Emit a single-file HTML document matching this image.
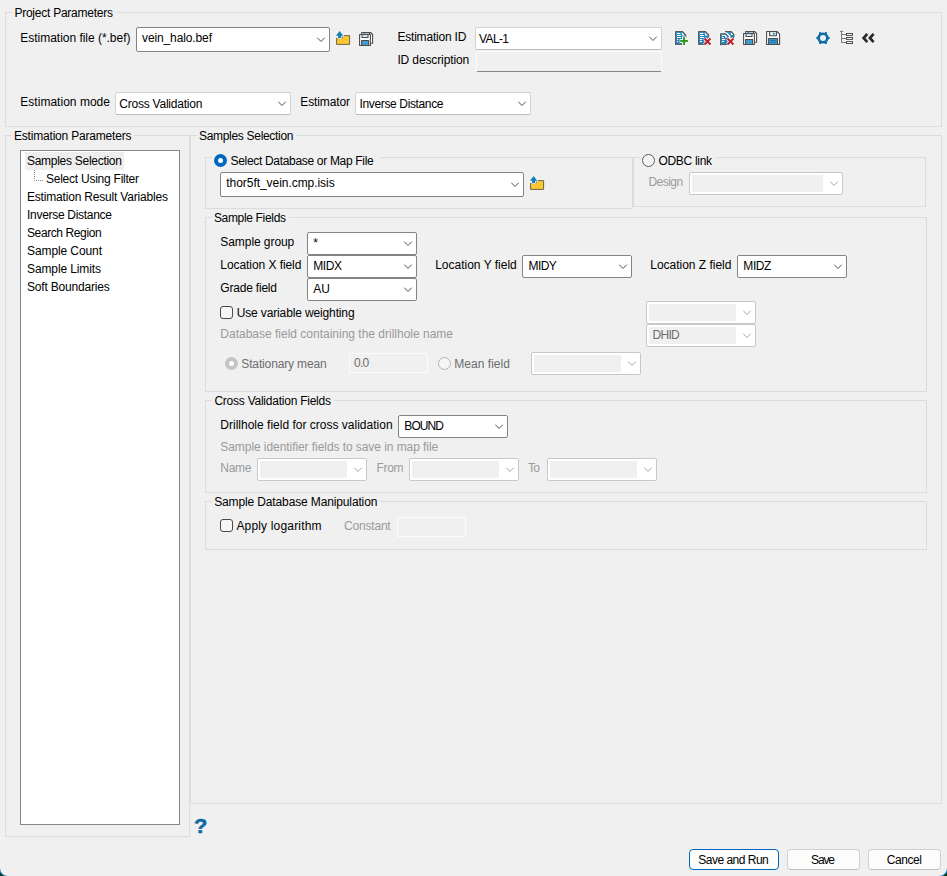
<!DOCTYPE html>
<html><head><meta charset="utf-8"><title>Estimation</title>
<style>
html,body{margin:0;padding:0}
body{width:947px;height:876px;overflow:hidden;background:#0a4012;position:relative;font-family:"Liberation Sans",sans-serif;font-size:12px}
#fr{position:absolute;left:-1px;top:-30px;width:949px;height:907px;box-sizing:border-box;background:#f0f0f0;border:1.5px solid #0a78d6;border-radius:9px}
#w{position:absolute;left:0;top:0;width:947px;height:876px}
#w div,#w svg.a,#w span.t{position:absolute;box-sizing:border-box}
.t{white-space:nowrap;line-height:14px;color:#000}
.gb{border:1px solid #dcdcdc}
.gap{background:#f0f0f0}
.tree{background:#fff;border:1px solid #828790}
.sel{background:#eeeeee}
.cbd{background:#fff;border:1px solid #848484;border-radius:2px}
.cbl{background:#fff;border:1px solid #d2d2d2;border-bottom-color:#bdbdbd;border-radius:2px}
.cbx{background:#fff;border:1px solid #c8c8c8;border-radius:2px}
.fill{background:#f0f0f0}
.edis{background:#f0f0f0;border:1px solid #fbfbfb;border-bottom:1px solid #868686;border-radius:2px}
.edis2{background:#f0f0f0;border:1px solid #fcfcfc;border-radius:1px}
.ron{width:13px;height:13px;border-radius:50%;background:#fff;border:4px solid #0067c0}
.roff{width:13px;height:13px;border-radius:50%;background:#f4f4f4;border:1px solid #5c5c5c}
.rdon{width:13px;height:13px;border-radius:50%;background:#fff;border:4px solid #c4c4c4}
.rdoff{width:13px;height:13px;border-radius:50%;background:#f6f6f6;border:1px solid #b4b4b4}
.ck{width:13px;height:13px;border-radius:3px;background:#f6f6f6;border:1px solid #4a4a4a}
.btn{background:#fdfdfd;border:1px solid #d0d0d0;border-bottom-color:#bdbdbd;border-radius:4px}
.btn.def{border-color:#0067c0;border-bottom-color:#0067c0}
</style></head>
<body><div id="fr"></div><div id="w">
<div class="gb" style="left:5px;top:12px;width:937px;height:115px;"></div><div class="gap" style="left:12px;top:11px;width:104px;height:3px"></div>
<div class="gb" style="left:5px;top:135px;width:185px;height:702px;"></div><div class="gap" style="left:12px;top:134px;width:122px;height:3px"></div>
<div class="gb" style="left:190px;top:135px;width:752px;height:669px;"></div><div class="gap" style="left:197px;top:134px;width:99px;height:3px"></div>
<div class="gb" style="left:205px;top:157px;width:428px;height:52px;"></div><div class="gap" style="left:212px;top:156px;width:168px;height:3px"></div>
<div class="gb" style="left:633px;top:157px;width:293px;height:50px;"></div><div class="gap" style="left:640px;top:156px;width:76px;height:3px"></div>
<div class="gb" style="left:205px;top:217px;width:722px;height:175px;"></div><div class="gap" style="left:212px;top:216px;width:77px;height:3px"></div>
<div class="gb" style="left:205px;top:400px;width:722px;height:93px;"></div><div class="gap" style="left:212px;top:399px;width:122px;height:3px"></div>
<div class="gb" style="left:205px;top:501px;width:722px;height:49px;"></div><div class="gap" style="left:212px;top:500px;width:168px;height:3px"></div>
<div class="tree" style="left:20px;top:150px;width:160px;height:675px;"></div>
<div class="sel" style="left:25px;top:152px;width:99px;height:18px;"></div>
<svg class="a" style="left:33px;top:169px" width="11" height="13" viewBox="0 0 11 13"><path d="M1.5 1 V11.5 H10" fill="none" stroke="#8a8a8a" stroke-width="1" stroke-dasharray="1 1"/></svg>
<div class="cbd" style="left:136px;top:27px;width:194px;height:25px;"></div><svg class="a" style="left:315px;top:35.9px" width="12" height="8" viewBox="0 0 12 8"><path d="M2.6 2 L6 5.5 L9.4 2" fill="none" stroke="#505050" stroke-width="1" stroke-linecap="round" stroke-linejoin="round"/></svg>
<div class="cbl" style="left:475px;top:27px;width:187px;height:23px;"></div><svg class="a" style="left:647px;top:34.9px" width="12" height="8" viewBox="0 0 12 8"><path d="M2.6 2 L6 5.5 L9.4 2" fill="none" stroke="#505050" stroke-width="1" stroke-linecap="round" stroke-linejoin="round"/></svg>
<div class="edis" style="left:476px;top:51px;width:186px;height:21px;"></div>
<div class="cbl" style="left:115px;top:92px;width:176px;height:23px;"></div><svg class="a" style="left:276px;top:99.9px" width="12" height="8" viewBox="0 0 12 8"><path d="M2.6 2 L6 5.5 L9.4 2" fill="none" stroke="#505050" stroke-width="1" stroke-linecap="round" stroke-linejoin="round"/></svg>
<div class="cbl" style="left:355px;top:92px;width:176px;height:23px;"></div><svg class="a" style="left:516px;top:99.9px" width="12" height="8" viewBox="0 0 12 8"><path d="M2.6 2 L6 5.5 L9.4 2" fill="none" stroke="#505050" stroke-width="1" stroke-linecap="round" stroke-linejoin="round"/></svg>
<div class="cbd" style="left:220px;top:172px;width:304px;height:25px;"></div><svg class="a" style="left:509px;top:180.9px" width="12" height="8" viewBox="0 0 12 8"><path d="M2.6 2 L6 5.5 L9.4 2" fill="none" stroke="#505050" stroke-width="1" stroke-linecap="round" stroke-linejoin="round"/></svg>
<div class="cbx" style="left:689px;top:172px;width:154px;height:23px;"></div><div class="fill" style="left:692px;top:175px;width:131px;height:17px;"></div><svg class="a" style="left:828px;top:179.9px" width="12" height="8" viewBox="0 0 12 8"><path d="M2.6 2 L6 5.5 L9.4 2" fill="none" stroke="#a6a6a6" stroke-width="1" stroke-linecap="round" stroke-linejoin="round"/></svg>
<div class="cbd" style="left:307px;top:232px;width:110px;height:23px;"></div><svg class="a" style="left:402px;top:239.9px" width="12" height="8" viewBox="0 0 12 8"><path d="M2.6 2 L6 5.5 L9.4 2" fill="none" stroke="#505050" stroke-width="1" stroke-linecap="round" stroke-linejoin="round"/></svg>
<div class="cbd" style="left:307px;top:255px;width:110px;height:23px;"></div><svg class="a" style="left:402px;top:262.9px" width="12" height="8" viewBox="0 0 12 8"><path d="M2.6 2 L6 5.5 L9.4 2" fill="none" stroke="#505050" stroke-width="1" stroke-linecap="round" stroke-linejoin="round"/></svg>
<div class="cbd" style="left:307px;top:278px;width:110px;height:23px;"></div><svg class="a" style="left:402px;top:285.9px" width="12" height="8" viewBox="0 0 12 8"><path d="M2.6 2 L6 5.5 L9.4 2" fill="none" stroke="#505050" stroke-width="1" stroke-linecap="round" stroke-linejoin="round"/></svg>
<div class="cbd" style="left:522px;top:255px;width:110px;height:23px;"></div><svg class="a" style="left:617px;top:262.9px" width="12" height="8" viewBox="0 0 12 8"><path d="M2.6 2 L6 5.5 L9.4 2" fill="none" stroke="#505050" stroke-width="1" stroke-linecap="round" stroke-linejoin="round"/></svg>
<div class="cbd" style="left:737px;top:255px;width:110px;height:23px;"></div><svg class="a" style="left:832px;top:262.9px" width="12" height="8" viewBox="0 0 12 8"><path d="M2.6 2 L6 5.5 L9.4 2" fill="none" stroke="#505050" stroke-width="1" stroke-linecap="round" stroke-linejoin="round"/></svg>
<div class="cbx" style="left:646px;top:301px;width:110px;height:23px;"></div><div class="fill" style="left:649px;top:304px;width:87px;height:17px;"></div><svg class="a" style="left:741px;top:308.9px" width="12" height="8" viewBox="0 0 12 8"><path d="M2.6 2 L6 5.5 L9.4 2" fill="none" stroke="#a6a6a6" stroke-width="1" stroke-linecap="round" stroke-linejoin="round"/></svg>
<div class="cbx" style="left:646px;top:324px;width:110px;height:23px;"></div><div class="fill" style="left:649px;top:327px;width:87px;height:17px;"></div><svg class="a" style="left:741px;top:331.9px" width="12" height="8" viewBox="0 0 12 8"><path d="M2.6 2 L6 5.5 L9.4 2" fill="none" stroke="#a6a6a6" stroke-width="1" stroke-linecap="round" stroke-linejoin="round"/></svg>
<div class="cbx" style="left:531px;top:352px;width:110px;height:23px;"></div><div class="fill" style="left:534px;top:355px;width:87px;height:17px;"></div><svg class="a" style="left:626px;top:359.9px" width="12" height="8" viewBox="0 0 12 8"><path d="M2.6 2 L6 5.5 L9.4 2" fill="none" stroke="#a6a6a6" stroke-width="1" stroke-linecap="round" stroke-linejoin="round"/></svg>
<div class="cbd" style="left:398px;top:415px;width:110px;height:23px;"></div><svg class="a" style="left:493px;top:422.9px" width="12" height="8" viewBox="0 0 12 8"><path d="M2.6 2 L6 5.5 L9.4 2" fill="none" stroke="#505050" stroke-width="1" stroke-linecap="round" stroke-linejoin="round"/></svg>
<div class="cbx" style="left:257px;top:458px;width:110px;height:23px;"></div><div class="fill" style="left:260px;top:461px;width:87px;height:17px;"></div><svg class="a" style="left:352px;top:465.9px" width="12" height="8" viewBox="0 0 12 8"><path d="M2.6 2 L6 5.5 L9.4 2" fill="none" stroke="#a6a6a6" stroke-width="1" stroke-linecap="round" stroke-linejoin="round"/></svg>
<div class="cbx" style="left:409px;top:458px;width:110px;height:23px;"></div><div class="fill" style="left:412px;top:461px;width:87px;height:17px;"></div><svg class="a" style="left:504px;top:465.9px" width="12" height="8" viewBox="0 0 12 8"><path d="M2.6 2 L6 5.5 L9.4 2" fill="none" stroke="#a6a6a6" stroke-width="1" stroke-linecap="round" stroke-linejoin="round"/></svg>
<div class="cbx" style="left:547px;top:458px;width:110px;height:23px;"></div><div class="fill" style="left:550px;top:461px;width:87px;height:17px;"></div><svg class="a" style="left:642px;top:465.9px" width="12" height="8" viewBox="0 0 12 8"><path d="M2.6 2 L6 5.5 L9.4 2" fill="none" stroke="#a6a6a6" stroke-width="1" stroke-linecap="round" stroke-linejoin="round"/></svg>
<div class="edis2" style="left:349px;top:353px;width:79px;height:20px;"></div>
<div class="edis2" style="left:397px;top:517px;width:69px;height:20px;"></div>
<div class="ron" style="left:214px;top:154px"></div>
<div class="roff" style="left:642px;top:154px"></div>
<div class="rdon" style="left:225px;top:357px"></div>
<div class="rdoff" style="left:438px;top:357px"></div>
<div class="ck" style="left:220px;top:306px"></div>
<div class="ck" style="left:220px;top:519px"></div>
<div class="btn def" style="left:689px;top:849px;width:90px;height:21px;"></div>
<div class="btn" style="left:787px;top:849px;width:73px;height:21px;"></div>
<div class="btn" style="left:868px;top:849px;width:73px;height:21px;"></div>
<svg class="a" style="left:330px;top:26px" width="52" height="26" viewBox="330 26 52 26">
<defs><linearGradient id="gb" x1="0" y1="0" x2="1" y2="1"><stop offset="0" stop-color="#3a9ad0"/><stop offset="1" stop-color="#1276ae"/></linearGradient></defs>
<g transform="translate(0 0)">
<path d="M336.6 38.3 H341.8 L343.2 35.6 H349.6 V44.4 H336.6 Z" fill="#fdc731" stroke="#6b6548" stroke-width="1" stroke-linejoin="round"/>
<path d="M339.6 31.1 L343.4 35.7 H341.2 V38 H338.1 V35.7 H335.9 Z" fill="#1b7db6" stroke="#f6f9fb" stroke-width="1.5" stroke-linejoin="round" style="paint-order:stroke"/>
</g>
<g transform="translate(359 32)" stroke="#4c4c4c" stroke-width="1.1" stroke-linejoin="round">
<path d="M2.6 0.5 H11.6 L13.6 2.5 V11.3 H2.6 Z" fill="#fff"/>
<rect x="5" y="0.5" width="5.5" height="2.6" fill="#9ccbe6"/>
<path d="M0.6 2.5 H11.4 V13.5 H0.6 Z" fill="#fff"/>
<rect x="3" y="2.5" width="6" height="3" fill="#d8e6ee"/>
<rect x="2.6" y="8.5" width="7" height="5" fill="#3f9ccf"/>
</g>
</svg>
<svg class="a" style="left:670px;top:26px" width="215" height="26" viewBox="670 26 215 26">
<g transform="translate(0 0)">
<path d="M675.6 31.5 H682.3 L685.6 34.8 V44.4 H675.6 Z" fill="url(#gb)"/>
<path d="M681.9 32.2 L685.2 35.5 H681.9 Z" fill="#fbfbfb"/>
<path d="M675.6 44.699999999999996 V31.5 H682.3 L685.7 34.9 V37.5" stroke="#5b5b5b" stroke-width="1.1" fill="none" stroke-linejoin="round"/>
<path d="M675.1 44.3 H682.2" stroke="#5b5b5b" stroke-width="1"/>
<path d="M677 33.5 H680.2 M677 35.5 H680.8 M677 37.5 H681 M677 39.5 H678.1 M677 41.5 H678.1" stroke="#fff" stroke-width="1.1"/>
</g>
<path d="M684 36.6 V45.4 M679.6 41 H688.4" stroke="#f5f8f4" stroke-width="4" fill="none"/>
<path d="M684 37.2 V44.9 M680.2 41 H687.9" stroke="#36991f" stroke-width="2.1" fill="none"/>
<g transform="translate(23 0)">
<path d="M675.6 31.5 H682.3 L685.6 34.8 V44.4 H675.6 Z" fill="url(#gb)"/>
<path d="M681.9 32.2 L685.2 35.5 H681.9 Z" fill="#fbfbfb"/>
<path d="M675.6 44.699999999999996 V31.5 H682.3 L685.7 34.9 V37.5" stroke="#5b5b5b" stroke-width="1.1" fill="none" stroke-linejoin="round"/>
<path d="M675.1 44.3 H682.2" stroke="#5b5b5b" stroke-width="1"/>
<path d="M677 33.5 H680.2 M677 35.5 H680.8 M677 37.5 H681 M677 39.5 H679 M677 41.5 H679" stroke="#fff" stroke-width="1.1"/>
</g>
<path d="M704.4 38.4 L710.6 44.6 M710.6 38.4 L704.4 44.6" stroke="#f6f2f2" stroke-width="3.8" fill="none"/>
<path d="M704.5 38.5 L710.5 44.5 M710.5 38.5 L704.5 44.5" stroke="#bd1f2a" stroke-width="1.9" fill="none"/>
<g transform="translate(50 0)">
<path d="M675.3 31.5 H681 L684 34.5 V38 H677 Z" fill="url(#gb)"/>
<path d="M680.8 32.3 L683.5 35 H680.8 Z" fill="#fbfbfb"/>
<path d="M675 31.5 H681.2 L684 34.4 V36.8" stroke="#5b5b5b" stroke-width="1.1" fill="none"/>
</g>
<g transform="translate(45 0)">
<path d="M674.6 32.5 H682 L685.5 36 V46 H674.6 Z" fill="#f7f9fa"/>
<path d="M675.6 33.7 H680.3 L683.6 37 V44.9 H675.6 Z" fill="url(#gb)"/>
<path d="M680 34.4 L683 37.4 H680 Z" fill="#fbfbfb"/>
<path d="M675.6 45.2 V33.7 H680.4 L683.6 36.9" stroke="#5b5b5b" stroke-width="1.1" fill="none" stroke-linejoin="round"/>
<path d="M675.1 44.6 H681" stroke="#5b5b5b" stroke-width="1"/>
<path d="M677 35.5 H680 M677 37.5 H679 M677 39.5 H680 M677 41.5 H679" stroke="#fff" stroke-width="1.1"/>
</g>
<path d="M727.4 38.4 L733.6 44.6 M733.6 38.4 L727.4 44.6" stroke="#f6f2f2" stroke-width="3.8" fill="none"/>
<path d="M727.5 38.5 L733.5 44.5 M733.5 38.5 L727.5 44.5" stroke="#bd1f2a" stroke-width="1.9" fill="none"/>
<g transform="translate(743 31)" stroke="#4c4c4c" stroke-width="1.1" stroke-linejoin="round">
<path d="M2.6 0.5 H11.6 L13.6 2.5 V11.3 H2.6 Z" fill="#fff"/>
<rect x="5" y="0.5" width="5.5" height="2.6" fill="#9ccbe6"/>
<path d="M0.6 2.5 H11.4 V13.5 H0.6 Z" fill="#fff"/>
<rect x="3" y="2.5" width="6" height="3" fill="#d8e6ee"/>
<rect x="2.6" y="8.5" width="7" height="5" fill="#3f9ccf"/>
</g>
<g stroke="#4c4c4c" stroke-width="1.1" stroke-linejoin="round">
<path d="M766.6 31.5 H777 L779.6 34.1 V44.5 H766.6 Z" fill="#fff"/>
<rect x="769.6" y="31.5" width="6.8" height="4.3" fill="#e9eef1"/>
<rect x="768.6" y="38.5" width="9" height="6" fill="#3f9ccf"/>
</g>
<rect x="773" y="32.8" width="1.6" height="1.8" fill="#1b7fb9"/>
<path d="M770 40.4 H776.4 M770 42.4 H776.4" stroke="#176fa6" stroke-width="0.9"/>
<g transform="translate(823 38)" stroke="#0f6ca9" fill="none">
<circle r="4.3" stroke-width="2.6"/>
<g stroke-width="2.4" stroke-linecap="round">
<path d="M5 0 H5.6" /><path d="M5 0 H5.6" transform="rotate(60)"/><path d="M5 0 H5.6" transform="rotate(120)"/>
<path d="M5 0 H5.6" transform="rotate(180)"/><path d="M5 0 H5.6" transform="rotate(240)"/><path d="M5 0 H5.6" transform="rotate(300)"/>
</g></g>
<path d="M840 31.4 H843.2 M841.5 31.4 V42.5 H846 M841.5 34.5 H846 M841.5 38.5 H846" stroke="#7a7a7a" stroke-width="1" fill="none"/>
<g fill="#fff" stroke="#505050" stroke-width="1">
<rect x="846.5" y="33.5" width="6" height="1.9"/><rect x="846.5" y="37.5" width="6" height="1.9"/><rect x="846.5" y="41.6" width="6" height="1.9"/>
</g>
<path d="M867.3 33.9 L863.6 38 L867.3 42.1 M873.6 33.9 L869.9 38 L873.6 42.1" stroke="#2b2b2b" stroke-width="2.7" fill="none" stroke-linejoin="miter"/>
</svg>
<svg class="a" style="left:526px;top:172px" width="24" height="24" viewBox="526 172 24 24">
<g transform="translate(194 145)">
<path d="M336.6 38.3 H341.8 L343.2 35.6 H349.6 V44.4 H336.6 Z" fill="#fdc731" stroke="#6b6548" stroke-width="1" stroke-linejoin="round"/>
<path d="M339.6 31.1 L343.4 35.7 H341.2 V38 H338.1 V35.7 H335.9 Z" fill="#1b7db6" stroke="#f6f9fb" stroke-width="1.5" stroke-linejoin="round" style="paint-order:stroke"/>
</g>
</svg>
<span class="t" style="left:193.7px;top:814px;font-size:19.5px;line-height:24px;font-weight:bold;color:#0a6aa6;-webkit-text-stroke:0.5px #0a6aa6;transform:scaleX(1.12);transform-origin:0 0">?</span>
<span class="t" id="t0" style="left:14.4px;top:6.0px;letter-spacing:-0.241px;">Project Parameters</span>
<span class="t" id="t1" style="left:20.3px;top:31.0px;letter-spacing:-0.024px;">Estimation file (*.bef)</span>
<span class="t" id="t2" style="left:142.0px;top:31.0px;letter-spacing:-0.116px;">vein_halo.bef</span>
<span class="t" id="t3" style="left:397.4px;top:30.0px;letter-spacing:-0.197px;">Estimation ID</span>
<span class="t" id="t4" style="left:479.0px;top:32.0px;letter-spacing:-0.617px;">VAL-1</span>
<span class="t" id="t5" style="left:397.4px;top:53.0px;letter-spacing:-0.121px;">ID description</span>
<span class="t" id="t6" style="left:20.3px;top:95.0px;letter-spacing:0.023px;">Estimation mode</span>
<span class="t" id="t7" style="left:119.3px;top:96.5px;letter-spacing:-0.232px;">Cross Validation</span>
<span class="t" id="t8" style="left:300.3px;top:95.0px;letter-spacing:-0.123px;">Estimator</span>
<span class="t" id="t9" style="left:359.5px;top:96.5px;letter-spacing:-0.358px;">Inverse Distance</span>
<span class="t" id="t10" style="left:14.0px;top:129.0px;letter-spacing:-0.195px;">Estimation Parameters</span>
<span class="t" id="t11" style="left:199.0px;top:129.0px;letter-spacing:-0.306px;">Samples Selection</span>
<span class="t" id="t12" style="left:27.0px;top:154.0px;letter-spacing:-0.281px;">Samples Selection</span>
<span class="t" id="t13" style="left:46.0px;top:172.0px;letter-spacing:-0.243px;">Select Using Filter</span>
<span class="t" id="t14" style="left:27.0px;top:190.0px;letter-spacing:-0.190px;">Estimation Result Variables</span>
<span class="t" id="t15" style="left:27.0px;top:208.0px;letter-spacing:-0.292px;">Inverse Distance</span>
<span class="t" id="t16" style="left:27.0px;top:226.0px;letter-spacing:-0.399px;">Search Region</span>
<span class="t" id="t17" style="left:27.0px;top:244.0px;letter-spacing:-0.095px;">Sample Count</span>
<span class="t" id="t18" style="left:27.0px;top:262.0px;letter-spacing:-0.113px;">Sample Limits</span>
<span class="t" id="t19" style="left:27.0px;top:280.0px;letter-spacing:-0.185px;">Soft Boundaries</span>
<span class="t" id="t20" style="left:230.5px;top:154.0px;letter-spacing:-0.316px;">Select Database or Map File</span>
<span class="t" id="t21" style="left:226.3px;top:176.0px;letter-spacing:-0.050px;">thor5ft_vein.cmp.isis</span>
<span class="t" id="t22" style="left:658.5px;top:154.0px;letter-spacing:-0.314px;">ODBC link</span>
<span class="t" id="t23" style="left:648.4px;top:175.0px;color:#9a9a9a;letter-spacing:-0.512px;">Design</span>
<span class="t" id="t24" style="left:213.9px;top:210.5px;letter-spacing:-0.328px;">Sample Fields</span>
<span class="t" id="t25" style="left:220.3px;top:235.4px;letter-spacing:-0.065px;">Sample group</span>
<span class="t" id="t26" style="left:313.3px;top:236.0px;">*</span>
<span class="t" id="t27" style="left:220.3px;top:257.5px;letter-spacing:-0.064px;">Location X field</span>
<span class="t" id="t28" style="left:313.3px;top:258.6px;letter-spacing:-0.433px;">MIDX</span>
<span class="t" id="t29" style="left:220.3px;top:281.3px;letter-spacing:-0.200px;">Grade field</span>
<span class="t" id="t30" style="left:313.3px;top:282.3px;letter-spacing:0.028px;">AU</span>
<span class="t" id="t31" style="left:435.2px;top:257.6px;letter-spacing:-0.002px;">Location Y field</span>
<span class="t" id="t32" style="left:528.5px;top:258.6px;letter-spacing:-0.567px;">MIDY</span>
<span class="t" id="t33" style="left:650.3px;top:257.6px;letter-spacing:-0.019px;">Location Z field</span>
<span class="t" id="t34" style="left:743.3px;top:258.6px;letter-spacing:-0.409px;">MIDZ</span>
<span class="t" id="t35" style="left:236.7px;top:306.3px;letter-spacing:-0.135px;">Use variable weighting</span>
<span class="t" id="t36" style="left:220.3px;top:327.0px;color:#9a9a9a;letter-spacing:-0.003px;">Database field containing the drillhole name</span>
<span class="t" id="t37" style="left:652.4px;top:328.0px;color:#6d6d6d;letter-spacing:-0.648px;">DHID</span>
<span class="t" id="t38" style="left:241.3px;top:357.0px;color:#6d6d6d;letter-spacing:-0.142px;">Stationary mean</span>
<span class="t" id="t39" style="left:354.0px;top:356.0px;color:#6d6d6d;letter-spacing:-0.694px;">0.0</span>
<span class="t" id="t40" style="left:454.2px;top:357.0px;color:#6d6d6d;letter-spacing:0.047px;">Mean field</span>
<span class="t" id="t41" style="left:214.4px;top:394.0px;letter-spacing:-0.238px;">Cross Validation Fields</span>
<span class="t" id="t42" style="left:220.3px;top:417.6px;letter-spacing:0.006px;">Drillhole field for cross validation</span>
<span class="t" id="t43" style="left:404.3px;top:419.0px;letter-spacing:-0.911px;">BOUND</span>
<span class="t" id="t44" style="left:220.3px;top:440.0px;color:#9a9a9a;letter-spacing:-0.067px;">Sample identifier fields to save in map file</span>
<span class="t" id="t45" style="left:220.3px;top:461.2px;color:#9a9a9a;letter-spacing:-0.305px;">Name</span>
<span class="t" id="t46" style="left:376.6px;top:461.2px;color:#9a9a9a;letter-spacing:-0.367px;">From</span>
<span class="t" id="t47" style="left:528.0px;top:461.2px;color:#9a9a9a;letter-spacing:-0.788px;">To</span>
<span class="t" id="t48" style="left:214.2px;top:494.7px;letter-spacing:-0.133px;">Sample Database Manipulation</span>
<span class="t" id="t49" style="left:236.4px;top:519.0px;letter-spacing:0.170px;">Apply logarithm</span>
<span class="t" id="t50" style="left:344.0px;top:519.0px;color:#9a9a9a;letter-spacing:-0.190px;">Constant</span>
<span class="t" id="t51" style="left:698.3px;top:853.2px;letter-spacing:-0.506px;">Save and Run</span>
<span class="t" id="t52" style="left:811.0px;top:853.2px;letter-spacing:-1.120px;">Save</span>
<span class="t" id="t53" style="left:886.7px;top:853.2px;letter-spacing:-0.432px;">Cancel</span>
</div></body></html>
